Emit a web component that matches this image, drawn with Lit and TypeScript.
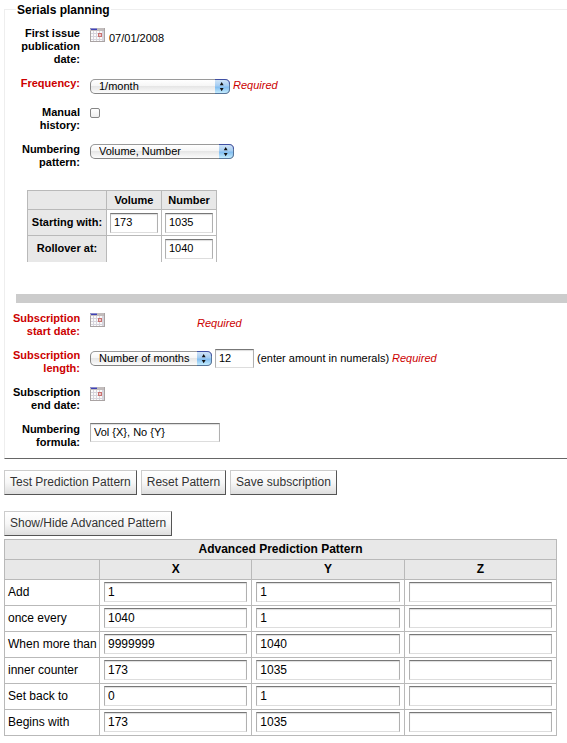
import { LitElement, html, css, svg } from "lit";
import { customElement, property, state } from "lit/decorators.js";

interface PatternRow {
  name: string;
  values: [string, string, string];
}

@customElement("calendar-icon")
class CalendarIcon extends LitElement {
  static styles = css`
    :host { display: block; width: 15px; height: 14px; }
    .art { display: block; width: 15px; height: 14px; }
  `;
  render() {
    return html`<svg class="art" viewBox="0 0 15 14" shape-rendering="crispEdges" aria-hidden="true">
      <rect width="15" height="14" fill="#a9a3a3" />
      <rect x="0" y="0" width="14" height="3" fill="#c2bcbc" />
      <rect x="0" y="0" width="7" height="1" fill="#8c8dc8" />
      <rect x="1" y="1" width="6" height="1" fill="#3f41b5" />
      <rect x="1" y="3" width="13" height="10" fill="#d6d4dc" />
      ${[1, 4, 7, 10].map((x) =>
        [3, 6, 9, 12].map((y) => svg`<rect x=${x} y=${y} width="2" height=${y > 10 ? 1 : 2} fill="#fafafa" />`)
      )}
      <rect x="8" y="5" width="4" height="4" fill="#c97070" />
      <rect x="9" y="6" width="2" height="2" fill="#ecc8c6" />
    </svg>`;
  }
}

@customElement("app-root")
class AppRoot extends LitElement {
  @state() private advanced = true;
  @property({ attribute: false }) rows: PatternRow[] = [
    { name: "Add", values: ["1", "1", ""] },
    { name: "once every", values: ["1040", "1", ""] },
    { name: "When more than", values: ["9999999", "1040", ""] },
    { name: "inner counter", values: ["173", "1035", ""] },
    { name: "Set back to", values: ["0", "1", ""] },
    { name: "Begins with", values: ["173", "1035", ""] },
  ];

  static styles = css`
    :host {
      display: block;
      background: #fff;
      color: #000;
      font: 11px/13px "Liberation Sans", Arial, sans-serif;
    }
    * { box-sizing: border-box; }
    .planning {
      margin: 0 0 0 4px;
      padding: 0 0 9px;
      border: solid #eee;
      border-width: 1px 0 0 1px;
      border-bottom: 1px solid #666;
    }
    .legend {
      margin-left: 11px;
      padding: 2px 1px 0;
      font-size: 12px;
      line-height: 17px;
      font-weight: bold;
    }
    .rows { display: grid; gap: 11px; padding: 8px 0 0 8px; }
    .bar + .rows { padding-top: 9px; }
    .row { display: grid; grid-template-columns: 67px 1fr; column-gap: 10px; align-items: start; }
    .label { text-align: right; font-weight: bold; }
    .needed { color: #c00; }
    .control { display: flex; align-items: center; gap: 3px; }
    .lowered { padding-top: 2px; }
    .single { padding-top: 1px; }
    .raised { align-items: flex-start; padding-bottom: 1px; }
    .date { align-items: flex-start; padding-top: 1px; gap: 4px; }
    .value { line-height: 20px; min-width: 84px; }
    .required { color: #c00; font-style: italic; }
    .date .required { line-height: 20px; }
    .picker { border: 0; padding: 0; background: none; cursor: pointer; }
    .tick {
      appearance: none;
      width: 10px;
      height: 10px;
      margin: 0;
      border: 1px solid #858585;
      border-radius: 2px;
      background: linear-gradient(#fff, #eee);
    }
    .tick:checked { background: #5f9ed8; }
    .popup { position: relative; display: inline-block; height: 15px; }
    .wide { width: 144px; }
    .medium { width: 140px; }
    .narrow { width: 122px; }
    .select {
      appearance: none;
      display: block;
      width: 100%;
      height: 15px;
      margin: 0;
      padding: 0 16px 1px 8px;
      border: 1px solid #858585;
      border-top-color: #9a9a9a;
      border-radius: 5px;
      background: linear-gradient(#fff, #f6f6f6 45%, #e6e6e6 50%, #fcfcfc);
      color: #000;
      font: inherit;
      line-height: 12px;
    }
    .cap { position: absolute; right: 0; top: 0; width: 15px; height: 15px; pointer-events: none; }
    .field {
      display: block;
      width: 100%;
      height: 20px;
      margin: 0;
      padding: 0 3px 1px;
      border: 1px solid #b0b0b0;
      border-top-color: #777;
      border-bottom-color: #ddd;
      border-radius: 0;
      background: #fff;
      box-shadow: inset 0 1px 1px #ddd;
      color: #000;
      font: inherit;
    }
    .control .field { height: 19px; }
    .field.short { width: 39px; }
    .field.formula { width: 130px; }
    .grid { border-collapse: collapse; }
    .grid th, .grid td { border: 1px solid #b9b9b9; }
    .grid thead th { background: #e8e8e8; font-weight: bold; text-align: center; }
    .start { margin: 21px 0 0 22px; }
    .start th { height: 19px; padding: 0 3px; background: #e8e8e8; }
    .start td { width: 55px; height: 26px; padding: 0 3px; }
    .start .side { width: 79px; white-space: nowrap; }
    .start tbody tr:last-child > * { border-bottom: 0; }
    .bar { height: 9px; margin: 32px 0 0 11px; background: #ccc; }
    .tools { display: flex; flex-wrap: wrap; gap: 4px; margin: 11px 4px 0; }
    .toggle { margin-top: 16px; }
    .button {
      height: 25px;
      margin: 0;
      padding: 0 5px;
      border: 1px solid #ccc;
      border-right-color: #555;
      border-bottom-color: #555;
      border-radius: 0;
      background: linear-gradient(#fff, #f7f7f7 50%, #dedede);
      color: #333;
      font: 12px/16px "Liberation Sans", Arial, sans-serif;
      cursor: pointer;
    }
    .advanced { padding: 3px 10px 7px 4px; font-size: 12px; }
    .advanced .grid { width: 100%; table-layout: fixed; }
    .advanced thead th { height: 20px; padding: 0 4px; }
    .advanced .names { width: 95px; }
    .advanced td { height: 26px; padding: 0 4px; }
    .advanced .name { padding: 0 0 0 3px; font-weight: normal; text-align: left; white-space: nowrap; }
  `;

  private popup(id: string, size: string, options: string[]) {
    return html`<span class="popup ${size}">
      <select class="select" id=${id}>
        ${options.map((o) => html`<option>${o}</option>`)}
      </select>
      <svg class="cap" viewBox="0 0 15 15" aria-hidden="true">
        <defs>
          <linearGradient id="cap-${id}" x1="0" y1="0" x2="0" y2="1">
            <stop offset="0" stop-color="#d3e5f7" />
            <stop offset=".45" stop-color="#a5cdf2" />
            <stop offset=".55" stop-color="#82bdf0" />
            <stop offset="1" stop-color="#c9f0ff" />
          </linearGradient>
        </defs>
        <path d="M0 .5H10Q14.500 .5 14.500 5V10Q14.500 14.500 10 14.500H0Z" fill="url(#cap-${id})" />
        <path d="M0 .5H10Q14.500 .5 14.500 5" fill="none" stroke="#4050a4" />
        <path d="M14.500 5V10Q14.500 14.500 10 14.500H0" fill="none" stroke="#56749a" />
        <path d="M4.800 6.200L6.700 3L8.600 6.200ZM4.800 9L6.700 12.200L8.600 9Z" fill="#111" />
      </svg>
    </span>`;
  }

  private picker(id: string) {
    return html`<button class="picker" id=${id} type="button"><calendar-icon></calendar-icon></button>`;
  }

  render() {
    return html`
      <fieldset class="planning">
        <legend class="legend">Serials planning</legend>
        <div class="rows">
          <div class="row">
            <label class="label" for="first">First issue publication date:</label>
            <div class="control date">${this.picker("first")}<span class="value">07/01/2008</span></div>
          </div>
          <div class="row">
            <label class="label needed" for="frequency">Frequency:</label>
            <div class="control lowered raised">
              ${this.popup("frequency", "medium", ["1/month"])}
              <span class="required">Required</span>
            </div>
          </div>
          <div class="row">
            <label class="label" for="manual">Manual history:</label>
            <div class="control lowered"><input class="tick" id="manual" type="checkbox" /></div>
          </div>
          <div class="row">
            <label class="label" for="numbering">Numbering pattern:</label>
            <div class="control single">${this.popup("numbering", "wide", ["Volume, Number"])}</div>
          </div>
        </div>

        <table class="grid start">
          <thead>
            <tr><th class="side"></th><th scope="col">Volume</th><th scope="col">Number</th></tr>
          </thead>
          <tbody>
            <tr>
              <th class="side" scope="row">Starting with:</th>
              <td><input class="field" aria-label="Starting volume" .value=${"173"} /></td>
              <td><input class="field" aria-label="Starting number" .value=${"1035"} /></td>
            </tr>
            <tr>
              <th class="side" scope="row">Rollover at:</th>
              <td></td>
              <td><input class="field" aria-label="Rollover number" .value=${"1040"} /></td>
            </tr>
          </tbody>
        </table>
        <div class="bar"></div>

        <div class="rows">
          <div class="row">
            <label class="label needed" for="begin">Subscription start date:</label>
            <div class="control date">
              ${this.picker("begin")}<span class="value"></span><span class="required">Required</span>
            </div>
          </div>
          <div class="row">
            <label class="label needed" for="unit">Subscription length:</label>
            <div class="control">
              ${this.popup("unit", "narrow", ["Number of months"])}
              <input class="field short" id="amount" .value=${"12"} />
              <label for="amount">(enter amount in numerals)</label>
              <span class="required">Required</span>
            </div>
          </div>
          <div class="row">
            <label class="label" for="end">Subscription end date:</label>
            <div class="control date">${this.picker("end")}</div>
          </div>
          <div class="row">
            <label class="label" for="formula">Numbering formula:</label>
            <div class="control"><input class="field formula" id="formula" .value=${"Vol {X}, No {Y}"} /></div>
          </div>
        </div>
      </fieldset>

      <div class="tools">
        <button class="button" type="button">Test Prediction Pattern</button>
        <button class="button" type="button">Reset Pattern</button>
        <button class="button" type="button">Save subscription</button>
      </div>
      <div class="tools toggle">
        <button class="button" type="button" @click=${() => (this.advanced = !this.advanced)}>
          Show/Hide Advanced Pattern
        </button>
      </div>

      ${this.advanced
        ? html`<div class="advanced">
            <table class="grid">
              <colgroup><col class="names" /><col /><col /><col /></colgroup>
              <thead>
                <tr><th colspan="4">Advanced Prediction Pattern</th></tr>
                <tr><th></th><th scope="col">X</th><th scope="col">Y</th><th scope="col">Z</th></tr>
              </thead>
              <tbody>
                ${this.rows.map(
                  (row) => html`<tr>
                    <th class="name" scope="row">${row.name}</th>
                    ${row.values.map(
                      (v, i) => html`<td><input class="field" aria-label="${row.name} ${"XYZ"[i]}" .value=${v} /></td>`
                    )}
                  </tr>`
                )}
              </tbody>
            </table>
          </div>`
        : null}
    `;
  }
}
